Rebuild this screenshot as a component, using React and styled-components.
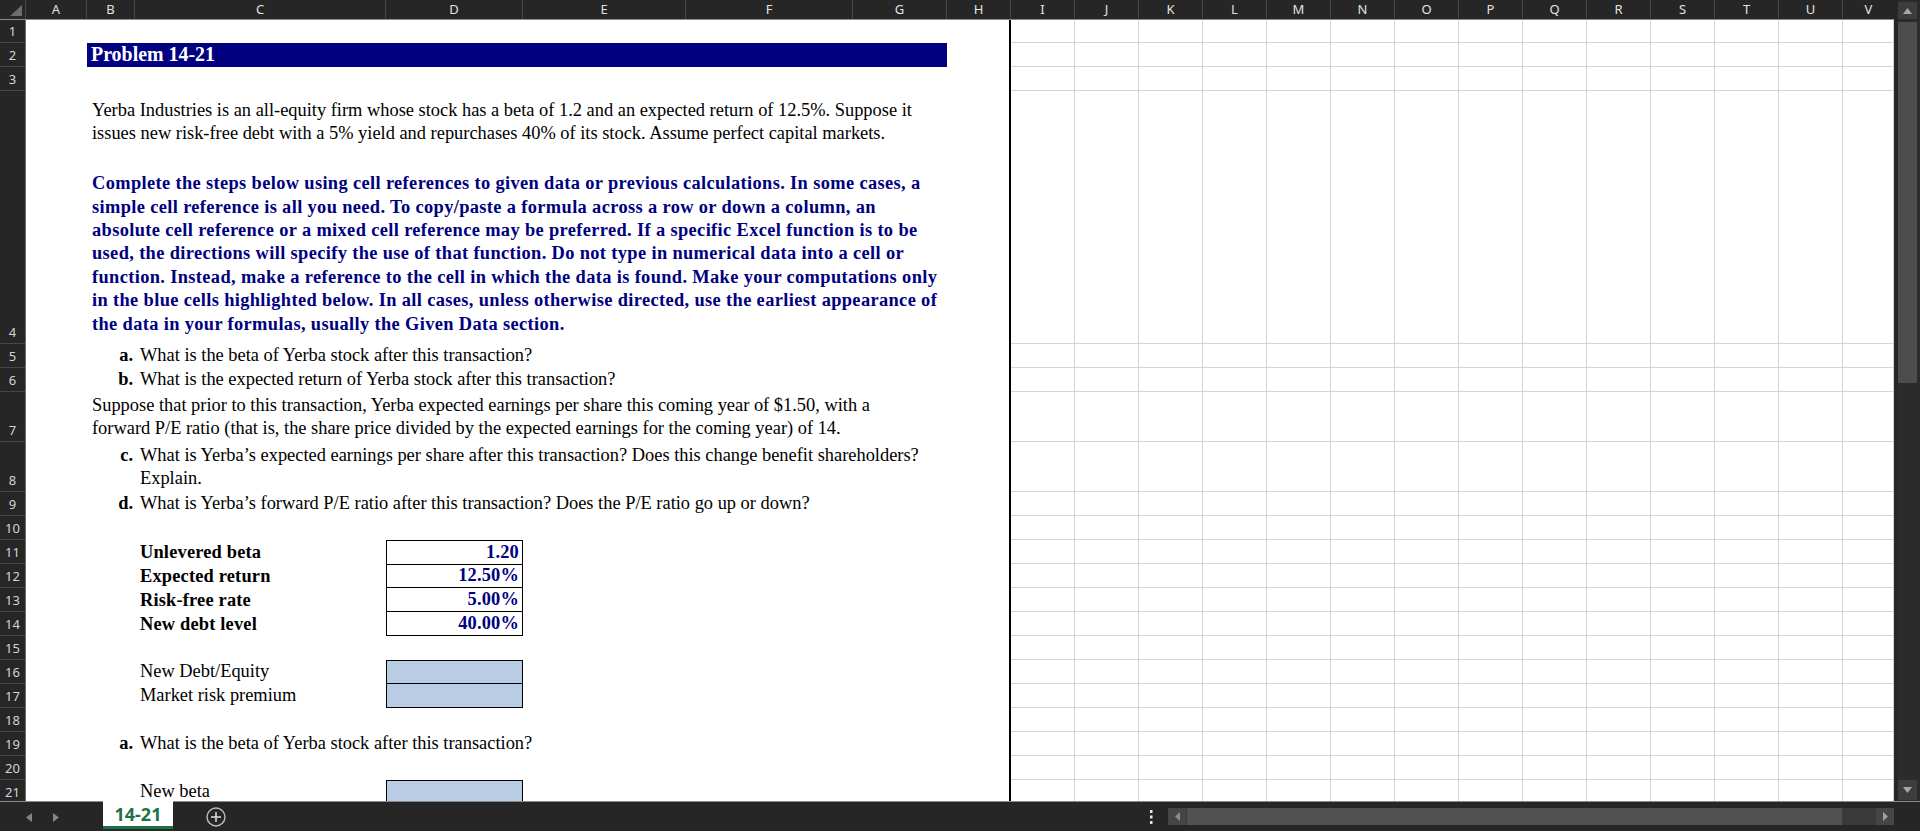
import React from 'react';
import styled, { createGlobalStyle } from 'styled-components';

const SERIF = `"Liberation Serif", "Times New Roman", serif`;
const UI = `"Noto Sans", "Open Sans", "DejaVu Sans", sans-serif`;
const NAVY = '#000080';
const DARK = '#262626';

const GlobalStyle = createGlobalStyle`
  html, body { margin: 0; padding: 0; background: ${DARK}; overflow: hidden; }
  #root { width: 1920px; height: 831px; }
`;

const LEFT_COLS = [
  { l: 'A', w: 61 }, { l: 'B', w: 48 }, { l: 'C', w: 251 }, { l: 'D', w: 137 },
  { l: 'E', w: 163 }, { l: 'F', w: 167 }, { l: 'G', w: 94 }, { l: 'H', w: 64 },
];
const RIGHT_COLS = ['I', 'J', 'K', 'L', 'M', 'N', 'O', 'P', 'Q', 'R', 'S', 'T', 'U', 'V'].map(
  (l) => ({ l, w: l === 'V' ? 51 : 64 })
);
const ALL_COLS = [...LEFT_COLS, ...RIGHT_COLS];

const ROWS = [23, 24, 24, 253, 24, 24, 50, 50, 24, 24, 24, 24, 24, 24, 24, 24, 24, 24, 24, 24, 24].map(
  (h, i) => ({ n: i + 1, h })
);

const Screen = styled.div`
  width: 1920px;
  height: 831px;
  display: flex;
  flex-direction: column;
  background: ${DARK};
  overflow: hidden;
`;

const Main = styled.div`
  display: flex;
  height: 801px;
  gap: 4px;
`;

const Sheet = styled.div`
  width: 1894px;
  display: flex;
  flex-direction: column;
`;

const ColHeaderBar = styled.div`
  display: flex;
  height: 20px;
  flex: none;
  box-sizing: border-box;
  border-bottom: 1px solid #8a8a8a;
  background: ${DARK};
`;

const Corner = styled.div`
  width: 26px;
  flex: none;
  box-sizing: border-box;
  border-right: 1px solid #474747;
  display: flex;
`;

const ColHead = styled.div`
  width: ${(p) => p.$w}px;
  flex: none;
  box-sizing: border-box;
  border-right: 1px solid #474747;
  font-family: ${UI};
  font-size: 13px;
  line-height: 19px;
  color: #e2e2e2;
  text-align: center;
  &:last-child { border-right: none; }
`;

const Body = styled.div`
  display: flex;
  height: 781px;
  overflow: hidden;
`;

const RowHeaderCol = styled.div`
  width: 26px;
  flex: none;
  display: flex;
  flex-direction: column;
  box-sizing: border-box;
  border-right: 1px solid #6e6e6e;
`;

const RowHead = styled.div`
  height: ${(p) => p.$h}px;
  flex: none;
  box-sizing: border-box;
  border-bottom: 1px solid #474747;
  display: flex;
  align-items: flex-end;
  justify-content: center;
  font-family: ${UI};
  font-size: 13px;
  line-height: 21px;
  color: #d4d4d4;
`;

const LeftPane = styled.div`
  width: 985px;
  flex: none;
  box-sizing: border-box;
  background: #fff;
  border-right: 2px solid #000;
  display: flex;
  flex-direction: column;
`;

const LeftRow = styled.div`
  display: grid;
  flex: none;
  grid-template-columns: 61px 48px 251px 137px 163px 167px 94px 62px;
  height: ${(p) => p.$h}px;
  align-items: center;
  font-family: ${SERIF};
  font-size: 18.4px;
  line-height: 23.4px;
  color: #000;
  white-space: nowrap;
`;

const TitleBar = styled.div`
  grid-column: 2 / 8;
  align-self: stretch;
  background: ${NAVY};
  color: #fff;
  font-weight: 700;
  font-size: 19.9px;
  padding-left: 4px;
  display: flex;
  align-items: center;
`;

const Para = styled.div`
  grid-column: ${(p) => p.$span};
  padding-left: 5px;
`;

const Line = styled.div`
  height: ${(p) => p.$h || 23.4}px;
  color: ${(p) => (p.$navy ? NAVY : 'inherit')};
  font-weight: ${(p) => (p.$bold ? 700 : 'inherit')};
  letter-spacing: ${(p) => (p.$bold ? '0.36px' : 'normal')};
`;

const Letter = styled.div`
  grid-column: 2;
  text-align: right;
  padding-right: 2px;
  font-weight: 700;
  align-self: ${(p) => (p.$top ? 'start' : 'center')};
  padding-top: ${(p) => (p.$top ? 1.5 : 0)}px;
`;

const QText = styled.div`
  grid-column: 3 / 9;
  padding-left: 5px;
`;

const FieldLabel = styled.div`
  grid-column: 3;
  padding-left: 5px;
  font-weight: ${(p) => (p.$bold ? 700 : 400)};
  letter-spacing: ${(p) => (p.$bold ? '0.18px' : 'normal')};
`;

const ValueCell = styled.div`
  grid-column: 4;
  align-self: stretch;
  box-sizing: border-box;
  border: 1px solid #000;
  border-top-width: ${(p) => (p.$first ? 1 : 0)}px;
  background: ${(p) => (p.$fill ? '#b8cce4' : 'transparent')};
  display: flex;
  align-items: center;
  justify-content: flex-end;
  padding-right: 3px;
  color: ${NAVY};
  font-weight: 700;
  letter-spacing: 0.18px;
`;

const RightPane = styled.div`
  flex: 1;
  background: #fff;
  display: flex;
  flex-direction: column;
`;

const GridRow = styled.div`
  display: flex;
  flex: none;
  height: ${(p) => p.$h}px;
`;

const GridCell = styled.div`
  width: ${(p) => p.$w}px;
  flex: none;
  box-sizing: border-box;
  border-right: 1px solid #d4d4d4;
  border-bottom: 1px solid #d4d4d4;
`;

const VScroll = styled.div`
  width: 22px;
  flex: none;
  display: flex;
  flex-direction: column;
  padding: 2px 0 1px 0;
  box-sizing: border-box;
  background: #2b2b2b;
`;

const ScrollBtn = styled.div`
  width: 19px;
  height: ${(p) => p.$h}px;
  background: #3d3d3d;
  display: flex;
  align-items: center;
  justify-content: center;
  margin-top: ${(p) => (p.$push ? 'auto' : '0')};
`;

const VThumb = styled.div`
  width: 19px;
  height: 361px;
  margin-top: 3px;
  background: #4d4d4d;
`;

const BottomBar = styled.div`
  height: 30px;
  box-sizing: border-box;
  border-top: 1px solid #8a8a8a;
  display: flex;
  align-items: flex-start;
  background: ${DARK};
`;

const NavGroup = styled.div`
  width: 103px;
  flex: none;
  display: flex;
  gap: 21px;
  padding-left: 26px;
  padding-top: 11px;
  box-sizing: border-box;
`;

const SheetTab = styled.div`
  width: 70px;
  height: 28px;
  margin-top: -1px;
  box-sizing: border-box;
  background: #fff;
  border-bottom: 3px solid #1e7145;
  font-family: ${UI};
  font-weight: 700;
  font-size: 18px;
  color: #1e7145;
  display: flex;
  align-items: center;
  justify-content: center;
`;

const PlusBtn = styled.div`
  margin-left: 33px;
  margin-top: 5px;
  width: 20px;
  height: 20px;
  display: flex;
`;

const Spacer = styled.div`
  flex: 1;
`;

const Dots = styled.div`
  width: 4px;
  margin-top: 8px;
  margin-right: 15px;
  display: flex;
`;

const HScroll = styled.div`
  width: 726px;
  height: 17px;
  margin-top: 6px;
  margin-right: 26px;
  display: flex;
  background: #3a3a3a;
`;

const HBtn = styled.div`
  width: 18px;
  flex: none;
  background: #464646;
  display: flex;
  align-items: center;
  justify-content: center;
`;

const HThumb = styled.div`
  width: 655px;
  margin-left: 1px;
  background: #515151;
`;

const HTrack = styled.div`
  flex: 1;
`;

const Tri = ({ dir, color = '#8a8a8a', w = 6, h = 9 }) => {
  const pts =
    dir === 'left'
      ? `${w},0 ${w},${h} 0,${h / 2}`
      : dir === 'right'
      ? `0,0 0,${h} ${w},${h / 2}`
      : dir === 'up'
      ? `0,${h} ${w},${h} ${w / 2},0`
      : `0,0 ${w},0 ${w / 2},${h}`;
  return (
    <svg width={w} height={h} viewBox={`0 0 ${w} ${h}`}>
      <polygon points={pts} fill={color} />
    </svg>
  );
};

const INTRO = [
  'Yerba Industries is an all-equity firm whose stock has a beta of 1.2 and an expected return of 12.5%. Suppose it',
  'issues new risk-free debt with a 5% yield and repurchases 40% of its stock. Assume perfect capital markets.',
];
const INSTR = [
  'Complete the steps below using cell references to given data or previous calculations. In some cases, a',
  'simple cell reference is all you need. To copy/paste a formula across a row or down a column, an',
  'absolute cell reference or a mixed cell reference may be preferred. If a specific Excel function is to be',
  'used, the directions will specify the use of that function. Do not type in numerical data into a cell or',
  'function. Instead, make a reference to the cell in which the data is found. Make your computations only',
  'in the blue cells highlighted below. In all cases, unless otherwise directed, use the earliest appearance of',
  'the data in your formulas, usually the Given Data section.',
];

const GIVEN = [
  ['Unlevered beta', '1.20'],
  ['Expected return', '12.50%'],
  ['Risk-free rate', '5.00%'],
  ['New debt level', '40.00%'],
];

function leftContent(n) {
  switch (n) {
    case 2:
      return <TitleBar>Problem 14-21</TitleBar>;
    case 4:
      return (
        <Para $span="2 / 8">
          {INTRO.map((t) => (
            <Line key={t}>{t}</Line>
          ))}
          <Line $h={26.4} />
          {INSTR.map((t) => (
            <Line key={t} $navy $bold>
              {t}
            </Line>
          ))}
        </Para>
      );
    case 5:
      return (
        <>
          <Letter>a.</Letter>
          <QText>What is the beta of Yerba stock after this transaction?</QText>
        </>
      );
    case 6:
      return (
        <>
          <Letter>b.</Letter>
          <QText>What is the expected return of Yerba stock after this transaction?</QText>
        </>
      );
    case 7:
      return (
        <Para $span="2 / 9">
          <Line>Suppose that prior to this transaction, Yerba expected earnings per share this coming year of $1.50, with a</Line>
          <Line>forward P/E ratio (that is, the share price divided by the expected earnings for the coming year) of 14.</Line>
        </Para>
      );
    case 8:
      return (
        <>
          <Letter $top>c.</Letter>
          <QText>
            <Line>What is Yerba’s expected earnings per share after this transaction? Does this change benefit shareholders?</Line>
            <Line>Explain.</Line>
          </QText>
        </>
      );
    case 9:
      return (
        <>
          <Letter>d.</Letter>
          <QText>What is Yerba’s forward P/E ratio after this transaction? Does the P/E ratio go up or down?</QText>
        </>
      );
    case 11:
    case 12:
    case 13:
    case 14: {
      const [label, val] = GIVEN[n - 11];
      return (
        <>
          <FieldLabel $bold>{label}</FieldLabel>
          <ValueCell $first={n === 11}>{val}</ValueCell>
        </>
      );
    }
    case 16:
      return (
        <>
          <FieldLabel>New Debt/Equity</FieldLabel>
          <ValueCell $first $fill />
        </>
      );
    case 17:
      return (
        <>
          <FieldLabel>Market risk premium</FieldLabel>
          <ValueCell $fill />
        </>
      );
    case 19:
      return (
        <>
          <Letter>a.</Letter>
          <QText>What is the beta of Yerba stock after this transaction?</QText>
        </>
      );
    case 21:
      return (
        <>
          <FieldLabel>New beta</FieldLabel>
          <ValueCell $first $fill />
        </>
      );
    default:
      return null;
  }
}

export default function App() {
  return (
    <>
      <GlobalStyle />
      <Screen>
        <Main>
          <Sheet>
            <ColHeaderBar>
              <Corner>
                <svg width="25" height="19" viewBox="0 0 25 19">
                  <polygon points="22,5 22,16 10,16" fill="#6d6d6d" />
                </svg>
              </Corner>
              {ALL_COLS.map((c) => (
                <ColHead key={c.l} $w={c.w}>
                  {c.l}
                </ColHead>
              ))}
            </ColHeaderBar>
            <Body>
              <RowHeaderCol>
                {ROWS.map((r) => (
                  <RowHead key={r.n} $h={r.h}>
                    {r.n}
                  </RowHead>
                ))}
              </RowHeaderCol>
              <LeftPane>
                {ROWS.map((r) => (
                  <LeftRow key={r.n} $h={r.h}>
                    {leftContent(r.n)}
                  </LeftRow>
                ))}
              </LeftPane>
              <RightPane>
                {ROWS.map((r) => (
                  <GridRow key={r.n} $h={r.h}>
                    {RIGHT_COLS.map((c) => (
                      <GridCell key={c.l} $w={c.w} />
                    ))}
                  </GridRow>
                ))}
              </RightPane>
            </Body>
          </Sheet>
          <VScroll>
            <ScrollBtn $h={17}>
              <Tri dir="up" color="#a6a6a6" w={9} h={6} />
            </ScrollBtn>
            <VThumb />
            <ScrollBtn $h={20} $push>
              <Tri dir="down" color="#a6a6a6" w={9} h={6} />
            </ScrollBtn>
          </VScroll>
        </Main>
        <BottomBar>
          <NavGroup>
            <Tri dir="left" color="#858585" />
            <Tri dir="right" color="#858585" />
          </NavGroup>
          <SheetTab>14-21</SheetTab>
          <PlusBtn>
            <svg width="20" height="20" viewBox="0 0 20 20">
              <circle cx="10" cy="10" r="9" fill="none" stroke="#bdbdbd" strokeWidth="1.4" />
              <line x1="10" y1="5" x2="10" y2="15" stroke="#d6d6d6" strokeWidth="1.6" />
              <line x1="5" y1="10" x2="15" y2="10" stroke="#d6d6d6" strokeWidth="1.6" />
            </svg>
          </PlusBtn>
          <Spacer />
          <Dots>
            <svg width="4" height="14" viewBox="0 0 4 14">
              <rect x="1" y="0" width="2.5" height="3" fill="#e6e6e6" />
              <rect x="1" y="5.5" width="2.5" height="3" fill="#e6e6e6" />
              <rect x="1" y="11" width="2.5" height="3" fill="#e6e6e6" />
            </svg>
          </Dots>
          <HScroll>
            <HBtn>
              <Tri dir="left" color="#8c8c8c" w={5} h={9} />
            </HBtn>
            <HThumb />
            <HTrack />
            <HBtn>
              <Tri dir="right" color="#a0a0a0" w={5} h={9} />
            </HBtn>
          </HScroll>
        </BottomBar>
      </Screen>
    </>
  );
}
